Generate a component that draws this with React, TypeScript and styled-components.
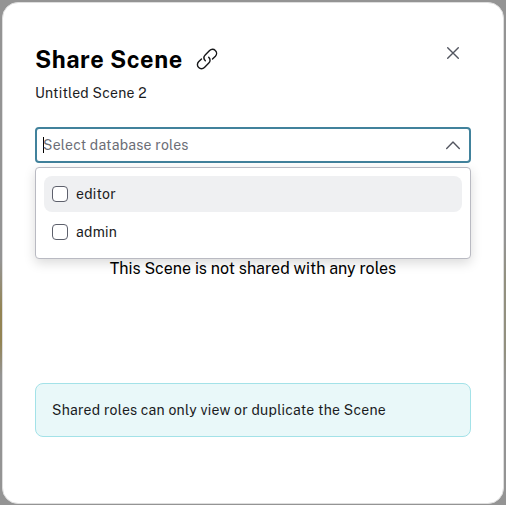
import React from "react";
import styled, { createGlobalStyle } from "styled-components";

const GlobalStyle = createGlobalStyle`
  * { box-sizing: border-box; }
  body {
    margin: 0;
    overflow: hidden;
    font-family: "Public Sans", Inter, sans-serif;
    color: #1a1b1d;
  }
  h1, p { margin: 0; }
`;

const Backdrop = styled.main`
  width: 506px;
  height: 505px;
  padding: 2px;
  background:
    linear-gradient(#949494 0 260px, #938453 310px 342px, #949494 376px) left / 50% 100% no-repeat,
    linear-gradient(#949494 0 240px, #92907f 280px 350px, #949494 380px) right / 50% 100% no-repeat;
`;

const Dialog = styled.section`
  display: flex;
  flex-direction: column;
  width: 502px;
  height: 502px;
  padding: 40px 33px 0 32px;
  border: 1px solid #dedede;
  border-radius: 16px;
  background: #fff;
`;

const Header = styled.header`
  display: flex;
  align-items: flex-start;
  justify-content: space-between;
  height: 40px;
`;

const Heading = styled.div`
  display: flex;
  align-items: center;
  gap: 14px;
  height: 32px;
`;

const Title = styled.h1`
  width: 147px;
  padding-top: 1px;
  font-size: 23.5px;
  line-height: 32px;
  font-weight: 700;
  letter-spacing: 0.54px;
  white-space: nowrap;
  color: #000;
`;

const CloseButton = styled.button`
  display: flex;
  padding: 0;
  margin: 2px 9px 0 0;
  border: 0;
  background: none;
  color: #535660;
`;

const Subtitle = styled.p`
  height: 20px;
  font-size: 14px;
  line-height: 20px;
  letter-spacing: 0.23px;
`;

const Field = styled.div`
  position: relative;
  margin-top: 24px;
  width: 436px;
`;

const SelectBox = styled.div`
  display: flex;
  align-items: center;
  justify-content: space-between;
  height: 36px;
  padding: 0 8px 0 6px;
  border: 2px solid #41829c;
  border-radius: 4px;
  font-size: 14px;
  color: #6b6d76;
`;

const Placeholder = styled.span`
  display: flex;
  align-items: center;
  letter-spacing: 0.25px;
`;

const Caret = styled.span`
  width: 1px;
  height: 16px;
  margin-right: -1px;
  background: #000;
`;

const Menu = styled.div`
  position: absolute;
  top: 40px;
  left: 0;
  width: 436px;
  height: 92px;
  padding: 8px;
  border: 1px solid #b9bac2;
  border-radius: 4px;
  background: #fff;
  box-shadow: 0 4px 12px rgba(0, 0, 0, 0.15);
`;

const Option = styled.label<{ $active?: boolean }>`
  display: flex;
  align-items: center;
  gap: 8px;
  height: 36px;
  padding-left: 8px;
  margin-bottom: 2px;
  border-radius: 8px;
  background: ${({ $active }) => ($active ? "#eff0f2" : "transparent")};
  font-size: 14px;
  letter-spacing: 0.23px;
`;

const Checkbox = styled.span`
  width: 16px;
  height: 16px;
  border: 1px solid #5d606c;
  border-radius: 4px;
  background: #fff;
`;

const EmptyMessage = styled.p`
  margin-top: 94px;
  width: 436px;
  text-align: center;
  font-size: 16px;
  line-height: 24px;
  color: #000;
  letter-spacing: 0;
`;

const Notice = styled.aside`
  display: flex;
  align-items: center;
  width: 436px;
  height: 54px;
  margin-top: 102px;
  padding-left: 16px;
  border: 1px solid #a3e2e8;
  border-radius: 8px;
  background: #e9f8f9;
  font-size: 14px;
  letter-spacing: 0.255px;
`;

function LinkIcon() {
  return (
    <svg width="22" height="22" viewBox="0 0 22 22" fill="none" stroke="#161719" strokeWidth="1.4" strokeLinecap="round">
      <path d="M9.3 12.7C7.5 10.9 7.5 8.7 9.2 7L13.6 2.6C15.3 .9 17.7.9 19.3 2.5C21 4.1 21 6.5 19.4 8.2L16.5 11.1" />
      <path d="M12.7 9.3C14.5 11.1 14.5 13.3 12.8 15L8.4 19.4C6.7 21.1 4.3 21.1 2.7 19.5C1 17.9 1 15.5 2.6 13.8L5.5 10.9" />
    </svg>
  );
}

function CloseIcon() {
  return (
    <svg width="16" height="16" viewBox="0 0 16 16" fill="none" stroke="currentColor" strokeWidth="1.4" strokeLinecap="round">
      <path d="M2.7 2.7 13.3 13.3M13.3 2.7 2.7 13.3" />
    </svg>
  );
}

function ChevronUpIcon() {
  return (
    <svg width="16" height="16" viewBox="0 0 16 16" fill="none" stroke="#535660" strokeWidth="1.4" strokeLinecap="round" strokeLinejoin="round">
      <path d="M1.7 11.4 8 5.1 14.3 11.4" />
    </svg>
  );
}

const roles = ["editor", "admin"];

export default function App() {
  return (
    <>
      <GlobalStyle />
      <Backdrop>
        <Dialog role="dialog" aria-labelledby="dialog-title">
          <Header>
            <Heading>
              <Title id="dialog-title">Share Scene</Title>
              <LinkIcon />
            </Heading>
            <CloseButton aria-label="Close"><CloseIcon /></CloseButton>
          </Header>
          <Subtitle>Untitled Scene 2</Subtitle>
          <Field>
            <SelectBox>
              <Placeholder><Caret />Select database roles</Placeholder>
              <ChevronUpIcon />
            </SelectBox>
            <Menu>
              {roles.map((role, index) => (
                <Option key={role} $active={index === 0}>
                  <Checkbox />
                  {role}
                </Option>
              ))}
            </Menu>
          </Field>
          <EmptyMessage>This Scene is not shared with any roles</EmptyMessage>
          <Notice>Shared roles can only view or duplicate the Scene</Notice>
        </Dialog>
      </Backdrop>
    </>
  );
}
